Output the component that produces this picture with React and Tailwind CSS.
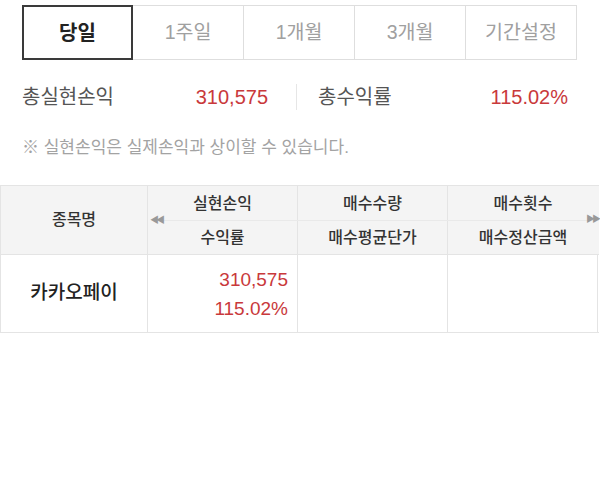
import React from 'react';

const tabs = ['당일', '1주일', '1개월', '3개월', '기간설정'];

const App = () => {
  return (
    <div className="w-[600px] h-[492px] bg-white" style={{ fontFamily: '"Liberation Sans", "Noto Sans CJK KR", sans-serif' }}>
      <div className="pt-[5px] px-[22px]">
        <div className="flex h-[55px]">
          {tabs.map((t, i) =>
            i === 0 ? (
              <div key={t} className="w-[111px] flex items-center justify-center border-2 border-[#3a3a3a] text-[20px] font-bold text-[#222]">
                {t}
              </div>
            ) : (
              <div key={t} className="w-[111px] flex items-center justify-center border border-l-0 border-[#dedede] text-[19.5px] text-[#a0a0a0]">
                {t}
              </div>
            )
          )}
        </div>
      </div>

      <div className="flex items-center h-[26px] mt-[24px] px-[22px]">
        <div className="flex w-[246px] justify-between items-center">
          <span className="text-[20px] text-[#555]">총실현손익</span>
          <span className="text-[20px] text-[#c9393b]">310,575</span>
        </div>
        <div className="w-px h-[26px] bg-[#e6e6e6] ml-[28px]" />
        <div className="flex flex-1 justify-between items-center pl-[21px] pr-[10px]">
          <span className="text-[20px] text-[#555]">총수익률</span>
          <span className="text-[20px] text-[#c9393b]">115.02%</span>
        </div>
      </div>

      <div className="px-[22px] mt-[26px] text-[17px] leading-[24px] text-[#a3a3a3]">※ 실현손익은 실제손익과 상이할 수 있습니다.</div>

      <div className="mt-[25px] w-[599px] border-t border-b border-[#e4e4e4]">
        <div className="flex bg-[#f4f4f4] border-b border-[#e4e4e4] h-[69px]">
          <div className="w-[148px] flex items-center justify-center text-[16px] font-medium text-[#333] border-l border-r border-[#e4e4e4]">종목명</div>
          <div className="relative flex-1 flex flex-col">
            <div className="flex h-[35px]">
              <div className="w-[150px] flex items-center justify-center text-[16px] font-medium text-[#333] border-r border-[#e4e4e4]">실현손익</div>
              <div className="w-[150px] flex items-center justify-center text-[16px] font-medium text-[#333] border-r border-[#e4e4e4]">매수수량</div>
              <div className="w-[150px] flex items-center justify-center text-[16px] font-medium text-[#333]">매수횟수</div>
            </div>
            <div className="flex flex-1">
              <div className="w-[150px] flex items-center justify-center text-[16px] font-medium text-[#333] border-r border-[#e4e4e4]">수익률</div>
              <div className="w-[150px] flex items-center justify-center text-[16px] font-medium text-[#333] border-r border-[#e4e4e4]">매수평균단가</div>
              <div className="w-[150px] flex items-center justify-center text-[16px] font-medium text-[#333]">매수정산금액</div>
            </div>
            <div className="absolute left-[15px] right-0 top-[34px] h-px bg-[#e9e9e9]" />
            <span className="absolute left-[2px] top-[30px] text-[9px] leading-none text-[#999] tracking-[-3px]">◀◀</span>
            <span className="absolute right-[1px] top-[29px] text-[9px] leading-none text-[#999] tracking-[-3px]">▶▶</span>
          </div>
        </div>
        <div className="flex h-[77px]">
          <div className="w-[148px] flex items-center justify-center text-[19px] font-medium text-[#222] border-l border-r border-[#e4e4e4]">카카오페이</div>
          <div className="w-[150px] flex flex-col items-end justify-center pr-[9px] text-[19px] leading-[29px] text-[#c9393b] border-r border-[#e4e4e4]">
            <span>310,575</span>
            <span>115.02%</span>
          </div>
          <div className="w-[150px] border-r border-[#e4e4e4]" />
          <div className="w-[150px] border-r border-[#e4e4e4]" />
        </div>
      </div>
    </div>
  );
};

export default App;
